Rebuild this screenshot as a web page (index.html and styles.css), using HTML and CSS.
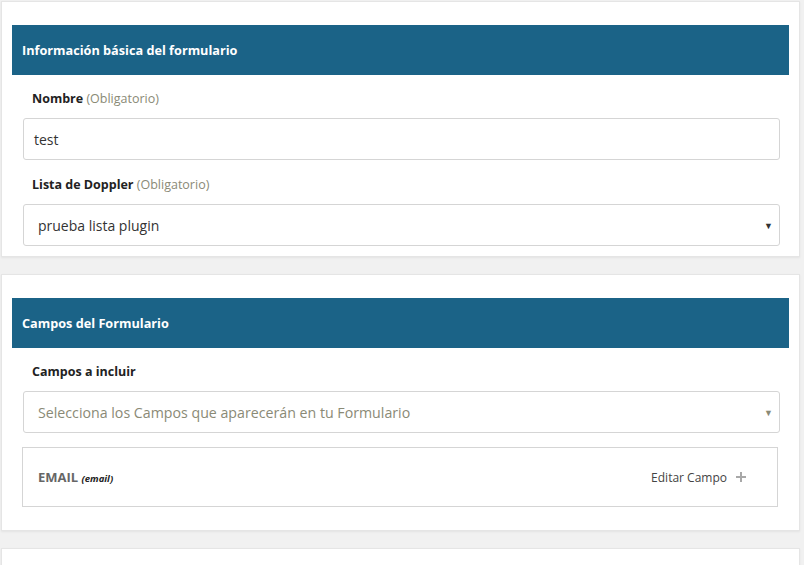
FILE: index.html
```html
<!DOCTYPE html>
<html lang="es">
<head>
<meta charset="utf-8">
<title>Formulario</title>
<link rel="stylesheet" href="styles.css">
</head>
<body>
<div class="page">
  <section class="card">
    <h2 class="card-header">Información básica del formulario</h2>
    <div class="card-body">
      <label class="label">Nombre <span class="req">(Obligatorio)</span></label>
      <div class="input">test</div>
      <label class="label label-gap">Lista de Doppler <span class="req">(Obligatorio)</span></label>
      <div class="select"><span class="select-text">prueba lista plugin</span><span class="arrow">▼</span></div>
    </div>
  </section>
  <section class="card card-fields">
    <h2 class="card-header">Campos del Formulario</h2>
    <div class="card-body">
      <label class="label">Campos a incluir</label>
      <div class="select"><span class="select-text ph">Selecciona los Campos que aparecerán en tu Formulario</span><span class="arrow light">▼</span></div>
      <div class="field-box">
        <div class="field-name">EMAIL <em class="field-type">(email)</em></div>
        <div class="field-edit">Editar Campo
          <svg class="plus" width="10" height="10" viewBox="0 0 10 10"><path d="M5 0V10M0 5H10" stroke="#a8a8a8" stroke-width="2"/></svg>
        </div>
      </div>
    </div>
  </section>
  <section class="card"></section>
</div>
</body>
</html>
```
FILE: styles.css
```css
* { box-sizing: border-box; }
html, body { margin: 0; padding: 0; background: #f1f1f1; }
body { font-family: "Open Sans", "Noto Sans", sans-serif; color: #333; }
.page { padding: 1px 4px 0 1px; display: flex; flex-direction: column; gap: 17px; }
.card { background: #fff; border: 1px solid #e5e5e5; box-shadow: 0 1px 2px rgba(0,0,0,0.06); padding: 23px 10px 10px 10px; min-height: 60px; }
.card-fields { padding-bottom: 23px; }
.card-header { margin: 0; background: #1b6387; color: #fff; height: 50px; display: flex; align-items: center; padding: 0 10px; font-size: 12.7px; font-weight: 700; }
.card-body { padding: 0 9px 0 11px; display: flex; flex-direction: column; }
.label { display: block; font-size: 12.5px; font-weight: 700; color: #222; padding: 15px 0 0 9px; height: 43px; line-height: 18px; }
.label-gap { height: 44px; padding-top: 16px; }
.req { font-weight: 400; color: #8a8a76; }
.input, .select { height: 42px; border: 1px solid #d5d5d5; border-radius: 3px; font-size: 14px; display: flex; align-items: center; color: #333; }
.input { padding-left: 10px; }
.select { padding: 0 6px 0 14px; justify-content: space-between; }
.select-text.ph { color: #8a8a76; font-size: 14.2px; }
.arrow { font-size: 9px; color: #333; }
.arrow.light { color: #8a8a76; }
.field-box { margin-top: 14px; margin-left: -1px; margin-right: 2px; height: 60px; border: 1px solid #d5d5d5; display: flex; align-items: center; justify-content: space-between; padding: 0 31px 0 15px; }
.field-name { font-size: 13px; font-weight: 700; color: #666; }
.field-type { font-size: 9.5px; color: #222; }
.field-edit { font-size: 12px; color: #444; display: flex; align-items: center; gap: 9px; }
.plus { display: block; }
```
